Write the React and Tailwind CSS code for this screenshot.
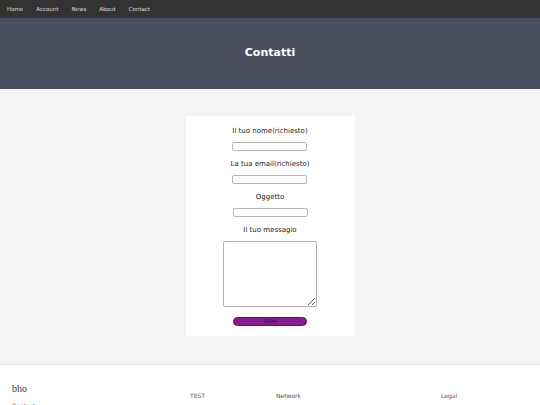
import React from 'react';

const navItems = ['Home', 'Account', 'News', 'About', 'Contact'];

function Field({ label, children }) {
  return (
    <div className="flex flex-col items-center">
      <label className="text-[7px] leading-[9px] text-[#222]">{label}</label>
      {children}
    </div>
  );
}

export default function App() {
  return (
    <div className="min-h-screen bg-white font-['DejaVu_Sans',sans-serif]">
      {/* nav */}
      <nav className="h-[18px] bg-[#333333] flex items-center gap-[13px] pl-[7px]">
        {navItems.map(item => (
          <a key={item} className="text-[5.5px] text-[#dddddd]">{item}</a>
        ))}
      </nav>

      {/* hero */}
      <header className="h-[71px] bg-[#4a4f5f] flex items-center justify-center">
        <h1 className="text-[11px] font-bold text-white">Contatti</h1>
      </header>

      {/* form */}
      <main className="bg-[#f4f4f4] pt-[27px] pb-[28px] border-b border-[#e6e6e6]">
        <form className="mx-auto w-[169px] bg-white pt-[11px] pb-[10px] flex flex-col items-center">
          <Field label="Il tuo nome(richiesto)">
            <input className="mt-[6px] w-[75px] h-[9px] border border-[#b5b5b5] rounded-[2px] bg-white" />
          </Field>
          <div className="h-[9px]" />
          <Field label="La tua email(richiesto)">
            <input className="mt-[6px] w-[75px] h-[9px] border border-[#b5b5b5] rounded-[2px] bg-white" />
          </Field>
          <div className="h-[9px]" />
          <Field label="Oggetto">
            <input className="mt-[6px] w-[75px] h-[9px] border border-[#b5b5b5] rounded-[2px] bg-white" />
          </Field>
          <div className="h-[9px]" />
          <Field label="Il tuo messagio">
            <textarea className="mt-[6px] w-[94px] h-[66px] border border-[#b5b5b5] rounded-[2px] bg-white resize" />
          </Field>
          <button
            type="button"
            className="mt-[10px] w-[74px] h-[9px] rounded-full bg-[#8a1a8e] border border-[#5e1060] text-[5px] leading-none text-[#3a0a3c]"
          >
            INVIA
          </button>
        </form>
      </main>

      {/* footer */}
      <footer className="flex pt-[17px] text-[#555]">
        <div className="w-[190px] pl-[12px]">
          <p className="font-['Liberation_Serif',serif] text-[10px] leading-[14px] text-[#333]">bho</p>
          <p className="mt-[5px] text-[6px] text-[#555]">Contact</p>
        </div>
        <div className="w-[86px] pt-[9px] text-[6px]">TEST</div>
        <div className="w-[165px] pt-[9px] text-[6px]">Network</div>
        <div className="pt-[9px] text-[6px]">Legal</div>
      </footer>
    </div>
  );
}
